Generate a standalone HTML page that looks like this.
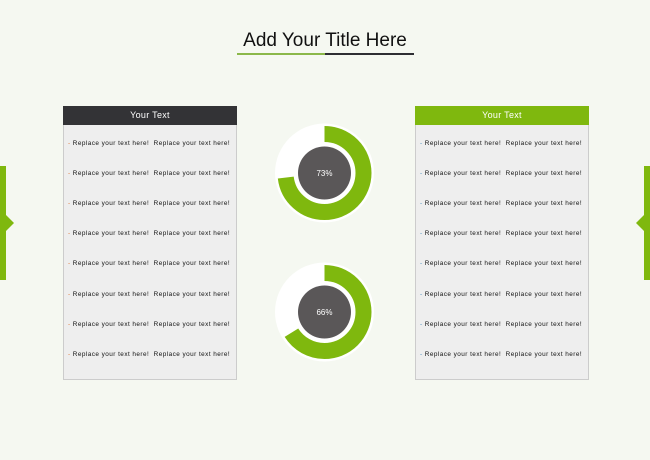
<!DOCTYPE html>
<html><head><style>
html,body{margin:0;padding:0}
body{width:650px;height:460px;background:#f5f8f1;position:relative;overflow:hidden;font-family:"Liberation Sans",sans-serif}
.t{position:absolute;left:0;width:650px;top:30px;text-align:center;font-size:19px;color:#111}
.l1{position:absolute;left:237px;top:53px;width:88px;height:2px;background:#8bb84a}
.l2{position:absolute;left:325px;top:53px;width:89px;height:2px;background:#2e2e33}
.p{position:absolute;top:106px;width:172px;height:273px;background:#eeeeee;border:1px solid #cccccc;border-top:none}
.h{height:19px;line-height:19px;text-align:center;color:#fff;font-size:9px;margin:0 -1px;letter-spacing:0.3px}
.r{position:absolute;left:4px;font-size:6.4px;white-space:nowrap;color:#111;letter-spacing:0.45px}
.r b{color:#e07a3a;font-weight:normal}
.bar{position:absolute;top:166px;width:6px;height:114px;background:#7fb80e}
</style></head><body>
<div class="t">Add Your Title Here</div>
<div class="l1"></div><div class="l2"></div>

<div class="bar" style="left:0"></div>
<svg style="position:absolute;left:6px;top:215px" width="8" height="16"><polygon points="0,0 8,8 0,16" fill="#7fb80e"/></svg>
<div class="bar" style="left:644px"></div>
<svg style="position:absolute;left:636px;top:215px" width="8" height="16"><polygon points="8,0 0,8 8,16" fill="#7fb80e"/></svg>

<div class="p" style="left:63px">
<div class="h" style="background:#333336">Your Text</div>
<div class="r" style="top:34px"><b>-</b> Replace your text here! &nbsp;Replace your text here!</div>
<div class="r" style="top:64px"><b>-</b> Replace your text here! &nbsp;Replace your text here!</div>
<div class="r" style="top:94px"><b>-</b> Replace your text here! &nbsp;Replace your text here!</div>
<div class="r" style="top:124px"><b>-</b> Replace your text here! &nbsp;Replace your text here!</div>
<div class="r" style="top:154px"><b>-</b> Replace your text here! &nbsp;Replace your text here!</div>
<div class="r" style="top:185px"><b>-</b> Replace your text here! &nbsp;Replace your text here!</div>
<div class="r" style="top:215px"><b>-</b> Replace your text here! &nbsp;Replace your text here!</div>
<div class="r" style="top:245px"><b>-</b> Replace your text here! &nbsp;Replace your text here!</div>
</div>

<div class="p" style="left:415px">
<div class="h" style="background:#7fb80e">Your Text</div>
<div class="r" style="top:34px"><b style="color:#4a8fc0">-</b> Replace your text here! &nbsp;Replace your text here!</div>
<div class="r" style="top:64px"><b style="color:#4a8fc0">-</b> Replace your text here! &nbsp;Replace your text here!</div>
<div class="r" style="top:94px"><b style="color:#4a8fc0">-</b> Replace your text here! &nbsp;Replace your text here!</div>
<div class="r" style="top:124px"><b style="color:#4a8fc0">-</b> Replace your text here! &nbsp;Replace your text here!</div>
<div class="r" style="top:154px"><b style="color:#4a8fc0">-</b> Replace your text here! &nbsp;Replace your text here!</div>
<div class="r" style="top:185px"><b style="color:#4a8fc0">-</b> Replace your text here! &nbsp;Replace your text here!</div>
<div class="r" style="top:215px"><b style="color:#4a8fc0">-</b> Replace your text here! &nbsp;Replace your text here!</div>
<div class="r" style="top:245px"><b style="color:#4a8fc0">-</b> Replace your text here! &nbsp;Replace your text here!</div>
</div>

<svg style="position:absolute;left:0;top:0" width="650" height="460">
<circle cx="324.5" cy="173" r="49.5" fill="#fff"/>
<circle cx="324.5" cy="173" r="39" fill="none" stroke="#7fb80e" stroke-width="16" stroke-dasharray="178.9 300" transform="rotate(-90 324.5 173)"/>
<circle cx="324.5" cy="173" r="26.5" fill="#5a5758"/>
<text x="324.5" y="176" text-anchor="middle" font-size="8" fill="#fff" font-family="Liberation Sans,sans-serif">73%</text>
<circle cx="324.5" cy="312" r="49.5" fill="#fff"/>
<circle cx="324.5" cy="312" r="39" fill="none" stroke="#7fb80e" stroke-width="16" stroke-dasharray="161.7 300" transform="rotate(-90 324.5 312)"/>
<circle cx="324.5" cy="312" r="26.5" fill="#5a5758"/>
<text x="324.5" y="315" text-anchor="middle" font-size="8" fill="#fff" font-family="Liberation Sans,sans-serif">66%</text>
</svg>
</body></html>
